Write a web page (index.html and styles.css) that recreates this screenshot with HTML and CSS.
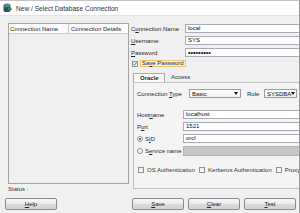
FILE: index.html
```html
<!DOCTYPE html>
<html>
<head>
<meta charset="utf-8">
<title>New / Select Database Connection</title>
<link rel="stylesheet" href="styles.css">
</head>
<body>
<div class="window">
  <div class="titlebar">
    <svg class="app-icon" width="9" height="10" viewBox="0 0 9 10">
      <ellipse cx="4" cy="2" rx="3.5" ry="1.6" fill="#5a7d92"/>
      <path d="M0.5 2 V7.5 A3.5 1.6 0 0 0 7.5 7.5 V2 A3.5 1.6 0 0 1 0.5 2 Z" fill="#2f4f63"/>
      <rect x="5" y="5.5" width="4" height="1.4" fill="#2fa13c"/>
      <rect x="6.3" y="4.2" width="1.4" height="4" fill="#2fa13c"/>
    </svg>
    <span class="title">New / Select Database Connection</span>
  </div>

  <div class="main">
    <div class="left">
      <div class="list">
        <div class="list-head">
          <div class="col col1">Connection Name</div>
          <div class="col col2">Connection Details</div>
        </div>
      </div>
      <div class="status">Status :</div>
    </div>

    <div class="form">
      <div class="fields">
        <span class="lbl">C<u>o</u>nnection Name</span><div class="input">local</div>
        <span class="lbl"><u>U</u>sername</span><div class="input">SYS</div>
        <span class="lbl"><u>P</u>assword</span><div class="input pwd">•••••••••</div>
      </div>

      <div class="save-row">
        <span class="check checked">
          <svg width="4" height="4" viewBox="0 0 4 4"><path d="M0.4 2.1 L1.5 3.2 L3.6 0.6" fill="none" stroke="#2b5fb8" stroke-width="0.9"/></svg>
        </span>
        <span class="focus-label">Sa<u>v</u>e Password</span>
      </div>

      <div class="tabs">
        <div class="tab-strip">
          <div class="tab active">Oracle</div>
          <div class="tab">Access</div>
        </div>
        <div class="tab-panel">
          <div class="type-row">
            <span class="lbl-type">Connection <u>T</u>ype</span>
            <div class="combo combo-type"><span>Basic</span><i class="arrow"></i></div>
            <span class="lbl-role">Role</span>
            <div class="combo combo-role"><span>SYSDBA</span><i class="arrow"></i></div>
          </div>
          <div class="conn-grid">
            <span class="lbl">Host<u>n</u>ame</span><div class="input">localhost</div>
            <span class="lbl">P<u>o</u>rt</span><div class="input">1521</div>
            <span class="lbl radio-lbl"><i class="radio on"></i><span>S<u>I</u>D</span></span><div class="input">orcl</div>
            <span class="lbl radio-lbl"><i class="radio"></i><span>S<u>e</u>rvice name</span></span><div class="input disabled"></div>
          </div>
          <div class="auth-row">
            <span class="cb-item"><i class="check"></i><span>OS Authentication</span></span>
            <span class="cb-item"><i class="check"></i><span>Kerberos Authentication</span></span>
            <span class="cb-item"><i class="check"></i><span>Proxy Connection</span></span>
          </div>
        </div>
      </div>
    </div>
  </div>

  <div class="buttons">
    <div class="btn btn-help"><span><u>H</u>elp</span></div>
    <div class="btn-group">
      <div class="btn"><span><u>S</u>ave</span></div>
      <div class="btn"><span><u>C</u>lear</span></div>
      <div class="btn"><span><u>T</u>est</span></div>
    </div>
  </div>
</div>
</body>
</html>
```

FILE: styles.css
```css
* { box-sizing: border-box; }

html, body {
  margin: 0;
  padding: 0;
}

body {
  width: 300px;
  height: 213px;
  overflow: hidden;
  background: #f0f0f0;
  font-family: "Liberation Sans", Arial, sans-serif;
  font-size: 6px;
  color: #1f1f2a;
}

u { text-decoration-thickness: 0.5px; text-underline-offset: 0.5px; }

.window {
  width: 300px;
  height: 213px;
  border-top: 1px solid #c4c4c4;
  border-right: 1px solid #9c9c9c;
  overflow: hidden;
  display: flex;
  flex-direction: column;
}

.titlebar {
  flex: none;
  height: 15px;
  background: #ffffff;
  border-bottom: 1px solid #e4e4e4;
  display: flex;
  align-items: center;
  gap: 4px;
  padding-left: 3px;
}

.app-icon { flex: none; display: block; }

.title {
  font-size: 6.6px;
  color: #333333;
  white-space: nowrap;
}

.main {
  flex: none;
  display: flex;
  align-items: flex-start;
  gap: 2px;
  margin-top: 7px;
  padding-left: 8px;
}

.left {
  flex: none;
  width: 121px;
  display: flex;
  flex-direction: column;
}

.list {
  height: 161px;
  border: 1px solid #a3a3a3;
  background: #efefef;
}

.list-head {
  display: flex;
  height: 10px;
  background: #fbfbfb;
  border-bottom: 1px solid #c9c9c9;
}

.col {
  display: flex;
  align-items: center;
  padding-left: 1px;
  white-space: nowrap;
  overflow: hidden;
}

.col1 { width: 60px; border-right: 1px solid #c9c9c9; }
.col2 { flex: 1; padding-left: 2px; }

.status {
  margin-top: 1px;
  height: 8px;
  line-height: 8px;
  color: #333;
}

.form {
  flex: none;
  width: 200px;
  margin-top: 1px;
}

.fields {
  display: grid;
  grid-template-columns: 54px 1fr;
  grid-auto-rows: 9px;
  row-gap: 3px;
  align-items: center;
}

.lbl { white-space: nowrap; }

.input {
  height: 9px;
  background: #ffffff;
  border: 1px solid #a9acb5;
  padding-left: 2px;
  line-height: 7px;
  white-space: nowrap;
  overflow: hidden;
  color: #111;
}

.input.pwd {
  font-size: 7.5px;
  line-height: 7px;
  letter-spacing: -0.1px;
}

.input.disabled {
  background: #c6c6c6;
  border-color: #b4b4b4;
  height: 10px;
}

.save-row {
  display: flex;
  align-items: center;
  gap: 2px;
  margin-top: 3px;
  padding-left: 1px;
  height: 7px;
}

.check {
  flex: none;
  width: 6px;
  height: 6px;
  border: 1px solid #8e8f8f;
  background: linear-gradient(#eaeaea, #ffffff);
  display: inline-flex;
  align-items: center;
  justify-content: center;
}

.check svg { display: block; }

.focus-label {
  height: 7px;
  line-height: 5px;
  padding: 0 1px;
  border: 1px solid #f2c46a;
  white-space: nowrap;
}

.tabs {
  margin-top: 6px;
  margin-left: 2px;
}

.tab-strip {
  display: flex;
  height: 9px;
  align-items: flex-end;
}

.tab {
  height: 9px;
  line-height: 8px;
  padding: 0 6px;
  color: #333;
}

.tab.active {
  width: 32px;
  text-align: center;
  font-weight: bold;
  background: #fbfbfb;
  border: 1px solid #a8a8a8;
  border-bottom: none;
  border-radius: 1px 1px 0 0;
  color: #1f1f2a;
}

.tab-panel {
  height: 107px;
  border: 1px solid #c2c2c2;
  background: #f4f4f4;
  padding: 6px 0 0 3px;
}

.type-row {
  display: flex;
  align-items: center;
  height: 9px;
}

.lbl-type { width: 52px; white-space: nowrap; }
.lbl-role { width: 17px; margin-left: 6px; }

.combo {
  height: 9px;
  border: 1px solid #9c9c9c;
  background: linear-gradient(#fdfdfd, #f1f1f1);
  display: flex;
  align-items: center;
  justify-content: space-between;
  padding: 0 2px;
  color: #111;
}

.combo-type { width: 52px; }
.combo-role { width: 33px; }

.arrow {
  width: 0;
  height: 0;
  border-left: 2.5px solid transparent;
  border-right: 2.5px solid transparent;
  border-top: 3px solid #111;
}

.conn-grid {
  margin-top: 12px;
  display: grid;
  grid-template-columns: 46px 1fr;
  grid-auto-rows: 9px;
  row-gap: 3px;
  align-items: center;
}

.radio-lbl {
  display: flex;
  align-items: center;
  gap: 2px;
}

.radio {
  width: 6px;
  height: 6px;
  border-radius: 50%;
  border: 1px solid #8e8f8f;
  background: #fafafa;
  display: flex;
  align-items: center;
  justify-content: center;
}

.radio.on::after {
  content: "";
  width: 2px;
  height: 2px;
  border-radius: 50%;
  background: #27466e;
}

.auth-row {
  margin-top: 11px;
  padding-left: 1px;
  display: flex;
  gap: 4px;
  height: 7px;
  align-items: center;
  white-space: nowrap;
}

.cb-item {
  display: flex;
  align-items: center;
  gap: 3px;
  color: #333;
}

.buttons {
  flex: none;
  display: flex;
  margin-top: 5px;
  padding-left: 5px;
}

.btn-group {
  display: flex;
  gap: 4px;
  margin-left: 75px;
}

.btn {
  width: 52px;
  height: 12px;
  border: 1px solid #8b8b8b;
  border-radius: 2px;
  background: linear-gradient(#f7f7f7, #ebebeb 50%, #dcdcdc 51%, #d3d3d3);
  display: flex;
  align-items: center;
  justify-content: center;
  color: #222;
}
```
